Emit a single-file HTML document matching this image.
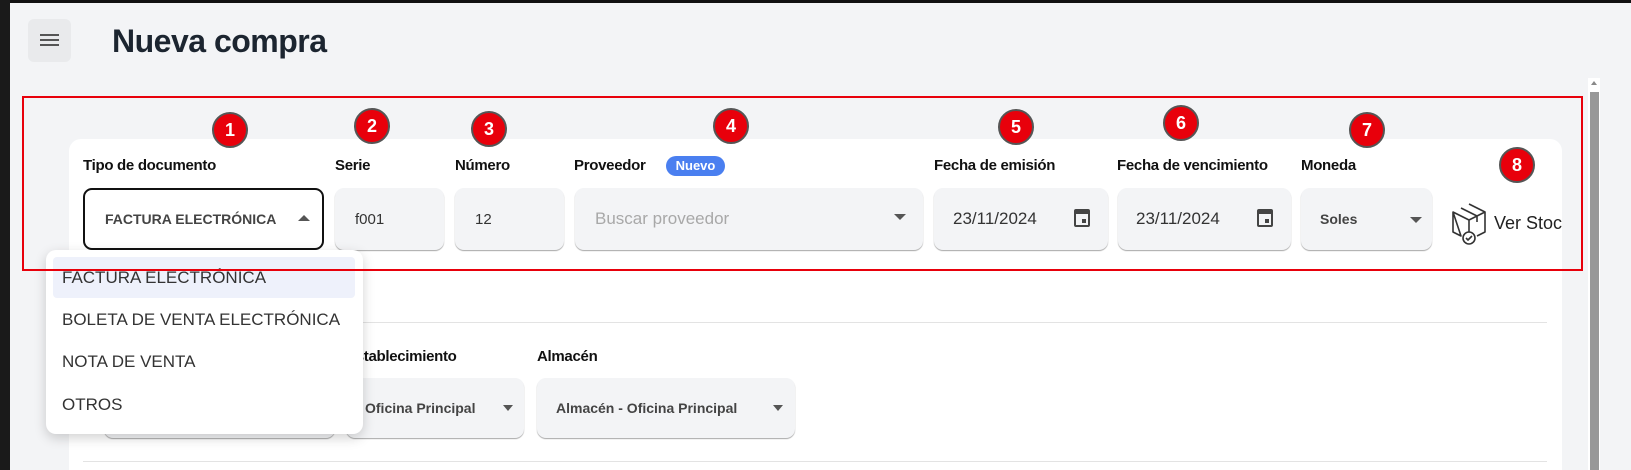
<!DOCTYPE html>
<html style="overflow:hidden"><head><meta charset="utf-8"><style>
*{box-sizing:border-box;margin:0;padding:0}
html,body{width:1631px;height:470px;overflow:hidden}
body{background:#f3f4f6;font-family:"Liberation Sans",sans-serif;position:relative}
.a{position:absolute}
.lbl{position:absolute;top:157px;font-size:15px;font-weight:bold;color:#111;letter-spacing:-0.3px}
.box{position:absolute;top:188px;height:62px;background:#f3f4f6;border-radius:9px;box-shadow:0 1px 1px rgba(0,0,0,.35);font-size:15px;color:#333;display:flex;align-items:center}
.badge{position:absolute;width:36px;height:36px;border-radius:50%;background:#e8000b;border:2px solid #555;color:#fff;font-weight:bold;font-size:18px;display:flex;align-items:center;justify-content:center}
.tri{position:absolute;width:0;height:0;border-left:6px solid transparent;border-right:6px solid transparent;border-top:6px solid #555}
.cal{position:absolute;width:16px;height:18px;border:2.5px solid #444;border-top-width:5px;border-radius:2px}
.cal:after{content:"";position:absolute;right:2px;bottom:2px;width:4px;height:4px;background:#444}
.item{position:absolute;left:16px;font-size:17px;color:#333}
</style></head><body>
<div class="a" style="left:0;top:0;width:1631px;height:3px;background:#111"></div>
<div class="a" style="left:0;top:0;width:10px;height:470px;background:#1a1a1a"></div>

<div class="a" style="left:28px;top:19px;width:43px;height:43px;background:#e9eaec;border-radius:6px"></div>
<div class="a" style="left:40px;top:34px;width:19px;height:2px;background:#555;box-shadow:0 5px 0 #555,0 10px 0 #555"></div>
<div class="a" style="left:112px;top:23px;font-size:32px;font-weight:bold;color:#1c2530;letter-spacing:-0.5px">Nueva compra</div>

<!-- scrollbar -->
<div class="a" style="left:1588px;top:78px;width:12px;height:392px;background:#fff"></div>
<div class="a" style="left:1590px;top:92px;width:9px;height:378px;background:#989898"></div>
<div class="a" style="left:1591px;top:81px;width:0;height:0;border-left:3px solid transparent;border-right:3px solid transparent;border-bottom:4px solid #888"></div>

<!-- card -->
<div class="a" style="left:69px;top:139px;width:1493px;height:331px;background:#fff;border-radius:12px 12px 0 0"></div>
<div class="a" style="left:83px;top:322px;width:1464px;height:1px;background:#e3e3e3"></div>
<div class="a" style="left:83px;top:461px;width:1464px;height:1px;background:#e3e3e3"></div>

<div class="lbl" style="left:83px">Tipo de documento</div>
<div class="lbl" style="left:335px">Serie</div>
<div class="lbl" style="left:455px">Número</div>
<div class="lbl" style="left:574px">Proveedor</div>
<div class="a" style="left:666px;top:156px;width:59px;height:20px;background:#4a7ff0;border-radius:10px;color:#fff;font-size:13px;font-weight:bold;text-align:center;line-height:20px">Nuevo</div>
<div class="lbl" style="left:934px">Fecha de emisión</div>
<div class="lbl" style="left:1117px">Fecha de vencimiento</div>
<div class="lbl" style="left:1301px">Moneda</div>

<div class="box" style="left:83px;width:241px;background:#fff;border:2px solid #111;box-shadow:none;padding-left:20px;font-size:14px;font-weight:bold;color:#444">FACTURA ELECTRÓNICA</div>
<div class="a" style="left:298px;top:215px;width:0;height:0;border-left:6px solid transparent;border-right:6px solid transparent;border-bottom:6px solid #555"></div>
<div class="box" style="left:335px;width:109px;padding-left:20px">f001</div>
<div class="box" style="left:455px;width:109px;padding-left:20px">12</div>
<div class="box" style="left:575px;width:348px;padding-left:20px;font-size:17px;color:#a8a8a8">Buscar proveedor</div>
<div class="tri" style="left:894px;top:214px"></div>
<div class="box" style="left:934px;width:174px;padding-left:19px;font-size:17px">23/11/2024</div>
<div class="cal" style="left:1074px;top:209px"></div>
<div class="box" style="left:1118px;width:173px;padding-left:18px;font-size:17px">23/11/2024</div>
<div class="cal" style="left:1257px;top:209px"></div>
<div class="box" style="left:1301px;width:131px;padding-left:19px;font-size:14px;font-weight:bold;color:#444">Soles</div>
<div class="tri" style="left:1410px;top:217px"></div>

<svg class="a" style="left:1450px;top:202px" width="38" height="44" viewBox="0 0 38 44" fill="none" stroke="#333" stroke-width="1.6" stroke-linejoin="round">
<path d="M19 2 L35 10 L35 30 L27 34 M11 34 L3 30 L3 10 Z M3 10 L19 18 L35 10 M19 18 L19 30 M11 6 L27 14 L27 20"/>
<circle cx="19" cy="36" r="6"/><path d="M16 36 l2 2 l4 -4"/>
</svg>
<div class="a" style="left:1494px;top:213px;width:68px;overflow:hidden;white-space:nowrap;font-size:18px;color:#222">Ver Stock</div>

<!-- second row -->
<div class="lbl" style="left:346px;top:348px">Establecimiento</div>
<div class="lbl" style="left:537px;top:348px">Almacén</div>
<div class="box" style="left:104px;top:378px;width:231px;height:60px"></div>
<div class="box" style="left:346px;top:378px;width:178px;height:60px;padding-left:19px;font-size:14px;font-weight:bold;color:#444">Oficina Principal</div>
<div class="tri" style="left:503px;top:405px;border-width:6px 5px 0 5px"></div>
<div class="box" style="left:537px;top:378px;width:258px;height:60px;padding-left:19px;font-size:14px;font-weight:bold;color:#444">Almacén - Oficina Principal</div>
<div class="tri" style="left:773px;top:405px;border-width:6px 5px 0 5px"></div>

<!-- dropdown menu -->
<div class="a" style="left:46px;top:250px;width:317px;height:184px;background:#fff;border-radius:10px;box-shadow:0 4px 12px rgba(0,0,0,.18)">
<div class="a" style="left:7px;top:7px;width:302px;height:41px;background:#eef1fb;border-radius:4px"></div>
<div class="item" style="top:18px">FACTURA ELECTRÓNICA</div>
<div class="item" style="top:60px">BOLETA DE VENTA ELECTRÓNICA</div>
<div class="item" style="top:102px">NOTA DE VENTA</div>
<div class="item" style="top:145px">OTROS</div>
</div>

<!-- red annotation box -->
<div class="a" style="left:22px;top:96px;width:1561px;height:175px;border:2px solid #e8000b"></div>

<div class="badge" style="left:212px;top:112px">1</div>
<div class="badge" style="left:354px;top:108px">2</div>
<div class="badge" style="left:471px;top:111px">3</div>
<div class="badge" style="left:713px;top:108px">4</div>
<div class="badge" style="left:998px;top:109px">5</div>
<div class="badge" style="left:1163px;top:105px">6</div>
<div class="badge" style="left:1349px;top:112px">7</div>
<div class="badge" style="left:1499px;top:147px">8</div>
</body></html>
